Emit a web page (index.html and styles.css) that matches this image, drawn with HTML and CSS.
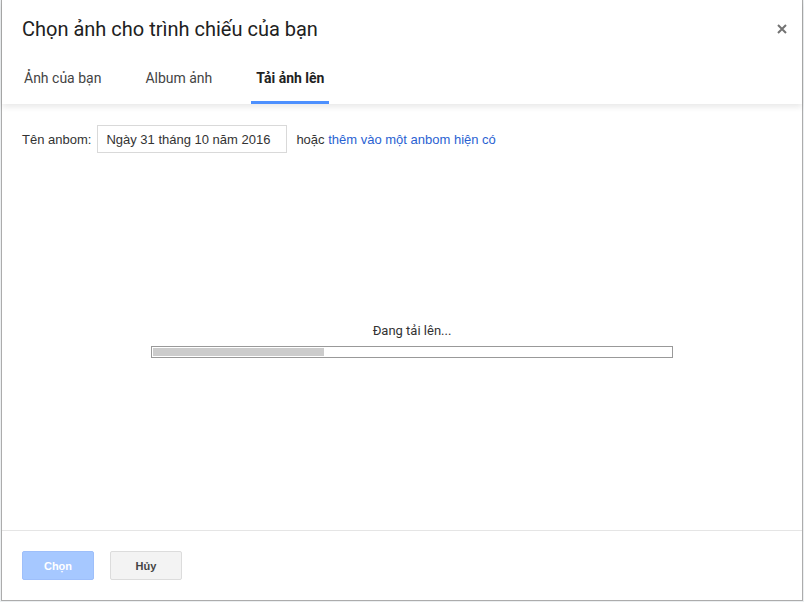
FILE: index.html
```html
<!DOCTYPE html>
<html lang="vi">
<head>
    <meta charset="UTF-8">
    <meta name="viewport" content="width=device-width, initial-scale=1.0">
    <title>Chọn ảnh cho trình chiếu của bạn</title>
    <link rel="stylesheet" href="styles.css">
</head>
<body>
    <div class="dialog">
        <header class="dialog-head">
            <div class="title-row">
                <h1>Chọn ảnh cho trình chiếu của bạn</h1>
                <button class="close" aria-label="Đóng">
                    <svg width="10" height="10" viewBox="0 0 10 10">
                        <path d="M1 1 L9 9 M9 1 L1 9" stroke="#737373" stroke-width="2" fill="none"/>
                    </svg>
                </button>
            </div>
            <nav class="tabs">
                <a class="tab">Ảnh của bạn</a>
                <a class="tab">Album ảnh</a>
                <a class="tab active">Tải ảnh lên</a>
            </nav>
        </header>

        <main class="dialog-body">
            <div class="album-row">
                <label for="album-name">Tên anbom:</label>
                <input type="text" id="album-name" value="Ngày 31 tháng 10 năm 2016">
                <span class="or">hoặc <a href="#" class="link">thêm vào một anbom hiện có</a></span>
            </div>

            <div class="upload-status">
                <p class="status-text">Đang tải lên...</p>
                <div class="progress">
                    <div class="progress-fill" style="width: 33%"></div>
                </div>
            </div>
        </main>

        <footer class="dialog-foot">
            <button class="btn btn-primary" disabled>Chọn</button>
            <button class="btn btn-cancel">Hủy</button>
        </footer>
    </div>
</body>
</html>
```

FILE: styles.css
```css
html, body {
    margin: 0;
    height: 100%;
}

body {
    background: #eceff1;
    font-family: Arial, "Liberation Sans", sans-serif;
    font-size: 13px;
    color: #222;
    overflow: hidden;
}

.dialog {
    margin-left: 1px;
    width: 800px;
    height: 600px;
    background: #fff;
    border: 1px solid #acacac;
    border-top: none;
    display: flex;
    flex-direction: column;
}

.dialog-head {
    position: relative;
    z-index: 1;
    padding: 0 20px;
    box-shadow: 0 3px 6px rgba(0, 0, 0, 0.09);
}

.title-row {
    display: flex;
    align-items: center;
    justify-content: space-between;
    padding-top: 17px;
}

.title-row h1 {
    margin: 0;
    font-family: Roboto, "Liberation Sans", sans-serif;
    font-weight: 400;
    font-size: 20px;
    line-height: 24px;
    color: #212121;
}

.close {
    border: none;
    background: none;
    padding: 0;
    margin-right: -5px;
    width: 10px;
    height: 10px;
    display: flex;
    cursor: pointer;
}

.tabs {
    display: flex;
    gap: 34px;
    margin: 27px 0 0 -3px;
}

.tab {
    font-family: Roboto, "Liberation Sans", sans-serif;
    font-size: 14px;
    line-height: 20px;
    color: #444;
    padding: 0 5px 13px;
    border-bottom: 3px solid transparent;
    cursor: pointer;
}

.tab.active {
    font-weight: 700;
    color: #222;
    border-bottom-color: #4d90fe;
}

.dialog-body {
    flex: 1;
    padding: 21px 0 0 20px;
}

.album-row {
    display: flex;
    align-items: center;
}

.album-row label {
    color: #333;
    margin-right: 6px;
}

.album-row input {
    box-sizing: border-box;
    width: 190px;
    height: 28px;
    padding: 0 8px;
    border: 1px solid #d9d9d9;
    font-family: Arial, "Liberation Sans", sans-serif;
    font-size: 13px;
    color: #333;
    margin-right: 9px;
}

.or {
    color: #333;
}

.link {
    color: #2a62d2;
    text-decoration: none;
}

.upload-status {
    width: 522px;
    margin: 170px auto 0;
    text-align: center;
}

.status-text {
    margin: 0 0 7px;
    font-family: Roboto, "Liberation Sans", sans-serif;
    font-size: 13px;
    line-height: 16px;
    color: #333;
}

.progress {
    border: 1px solid #999;
    padding: 1px;
    height: 8px;
}

.progress-fill {
    height: 100%;
    background: #ccc;
}

.dialog-foot {
    border-top: 1px solid #e5e5e5;
    padding: 20px 20px 20px;
    display: flex;
    gap: 16px;
}

.btn {
    box-sizing: border-box;
    width: 72px;
    height: 29px;
    border-radius: 2px;
    font-family: Arial, "Liberation Sans", sans-serif;
    font-size: 11px;
    font-weight: 700;
    cursor: pointer;
}

.btn-primary {
    background: #a6c8ff;
    border: 1px solid #9ebffa;
    color: #fff;
}

.btn-cancel {
    background: #f3f3f3;
    border: 1px solid #dcdcdc;
    color: #444;
}
```
